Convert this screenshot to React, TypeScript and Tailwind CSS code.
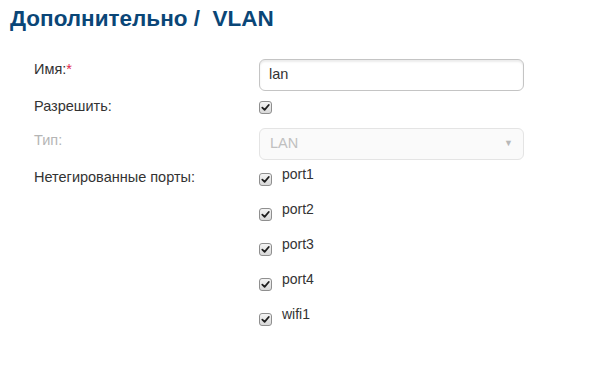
import React from "react";

function Check({ className = "" }: { className?: string }) {
  return (
    <span
      className={`inline-flex h-[13px] w-[13px] shrink-0 items-center justify-center rounded-[3px] border border-[#8f8f8f] bg-gradient-to-b from-[#f4f4f4] to-[#d8d8d8] ${className}`}
    >
      <svg viewBox="0 0 10 10" className="h-[9px] w-[9px]">
        <path d="M1.5 5.2 L4 7.6 L8.6 2.2" fill="none" stroke="#1e1e1e" strokeWidth="2" strokeLinecap="round" strokeLinejoin="round" />
      </svg>
    </span>
  );
}

const ports = ["port1", "port2", "port3", "port4", "wifi1"];

export default function App() {
  return (
    <div className="h-[370px] w-[609px] bg-white pl-[10px] pt-[5px] font-['Liberation_Sans',Arial,sans-serif] text-[14px] text-[#333]">
      <h1 className="text-[22.5px] font-bold leading-[27px] text-[#0a4677]">Дополнительно /&nbsp; VLAN</h1>

      <div className="mt-[27px] pl-[24px]">
        <div className="flex items-start">
          <div className="w-[225px] text-[14.5px] leading-[20px]">
            Имя:<span className="text-[#e0264d]">*</span>
          </div>
          <div className="flex h-[32px] w-[265px] items-center rounded-[6px] border border-[#c4c4c4] bg-white px-[9px] text-[14.5px] shadow-[inset_0_2px_2px_rgba(0,0,0,0.08)]">
            lan
          </div>
        </div>

        <div className="mt-[5px] flex items-start">
          <div className="w-[225px] text-[14.5px] leading-[20px]">Разрешить:</div>
          <Check className="mt-[5px]" />
        </div>

        <div className="mt-[12px] flex items-start">
          <div className="w-[225px] pt-[2px] text-[14.5px] leading-[20px] text-[#b5b5b5]">Тип:</div>
          <div className="flex h-[32px] w-[265px] items-center justify-between rounded-[6px] border border-[#e4e4e4] bg-[#fafafa] px-[10px] text-[14.5px] text-[#c0c0c0]">
            <span>LAN</span>
            <span className="text-[9px] text-[#b8b8b8]">▼</span>
          </div>
        </div>

        <div className="mt-[5px] flex items-start">
          <div className="w-[225px] pt-[2px] text-[14.5px] leading-[20px]">Нетегированные порты:</div>
          <div className="flex flex-col">
            {ports.map((p) => (
              <div key={p} className="flex h-[35px] items-start">
                <Check className="mt-[8px]" />
                <span className="ml-[10px] leading-[18px]">{p}</span>
              </div>
            ))}
          </div>
        </div>
      </div>
    </div>
  );
}
